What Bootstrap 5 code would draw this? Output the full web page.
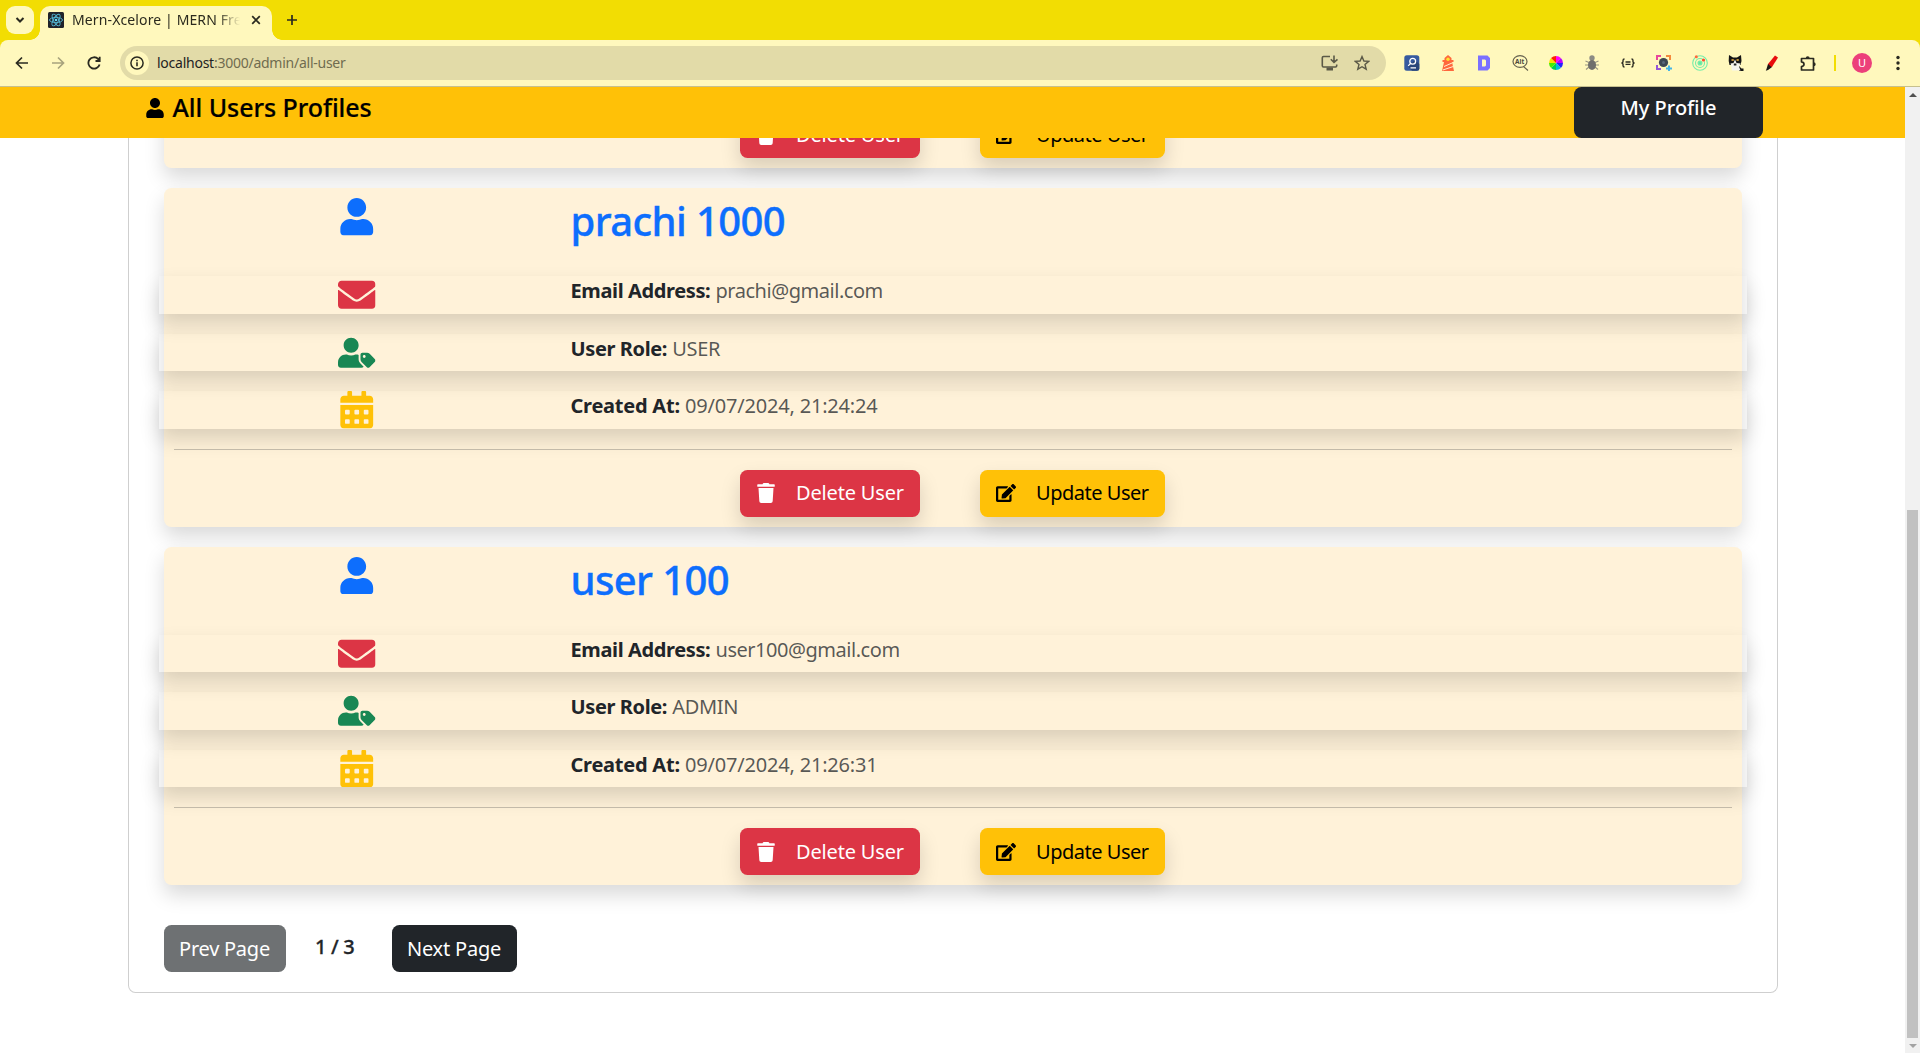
<!DOCTYPE html>
<html lang="en">
<head>
<meta charset="utf-8">
<title>Mern-Xcelore | MERN</title>
<link href="https://cdn.jsdelivr.net/npm/bootstrap@5.3.0/dist/css/bootstrap.min.css" rel="stylesheet">
<style>
html{font-size:20px}
body{font-family:"Noto Sans","Open Sans",sans-serif;height:1053px;overflow:hidden;background:#fff}
svg{display:block;flex:none}
.shadow{box-shadow:0 .5rem 1rem rgba(0,0,0,.15)!important}
.tabstrip{height:40px;background:#f2dd03;padding:6px 0 0 6px}
.tab-search{width:28px;height:28px;border-radius:9px;background:#fff8bd}
.tab-item{width:232px;height:34px;margin-left:6px;padding:0 11px 6px 8px;border-radius:10px 10px 0 0;background:#fff8bd}
.tab-item::before,.tab-item::after{content:"";position:absolute;bottom:0;width:10px;height:10px}
.tab-item::before{left:-10px;background:radial-gradient(circle at 0 0,transparent 9.5px,#fff8bd 10px)}
.tab-item::after{right:-10px;background:radial-gradient(circle at 100% 0,transparent 9.5px,#fff8bd 10px)}
.tab-name{width:168px;margin-left:8px;font-size:14px;line-height:20px;letter-spacing:.12px;color:#2b2a1e;white-space:nowrap;overflow:hidden;-webkit-mask-image:linear-gradient(90deg,#000 145px,transparent 168px);mask-image:linear-gradient(90deg,#000 145px,transparent 168px)}
.new-tab{margin:9px 0 0 15px}
.strip-back{background:#f2dd03}
.toolbar-row{height:47px;padding-left:4px;border-bottom:1px solid #c6c08f;border-radius:8px 8px 0 0;background:#fff8bd}
.slot{width:36px;height:46px;display:flex;align-items:center;justify-content:center;flex:none}
.addr{width:1266px;height:34px;margin-left:8px;border-radius:17px;background:#e2dba8;padding:0 8px 0 5px}
.addr .slot{width:32px}
.info-dot{width:24px;height:24px;border-radius:50%;background:#fff8bd}
.url{font-size:14px;line-height:20px;margin-left:8px;letter-spacing:-.25px;color:#706c4f}
.url b{font-weight:400;color:#222}
.ext-icons{margin-left:8px}
.avatar-dot{width:20px;height:20px;border-radius:50%;background:#ec407a;color:#fff;font-size:11px;line-height:20px;text-align:center}
.sep-slot{width:18px}
.sep-slot i{width:2px;height:16px;background:#f2dd03}
.pagebox{height:966px}
.topbar{height:51px;padding-left:145px;padding-right:142px;background:#ffc107}
.topbar h5{font-size:25px;line-height:30px;margin:5px 0 0 7.5px;color:#000;font-weight:500;letter-spacing:-.05px;-webkit-text-stroke:.2px #000}
.topbar svg{margin-top:11px}
.profile-btn{width:189px;height:51px;border-radius:7.5px;background:#212529;color:#fff;font-size:20px;line-height:30px;font-weight:500;padding-top:6px;text-align:center}
.main-area{height:915px}
.users-box{width:1650px;height:855px;margin-left:127.500px;padding:0 35px 20px;border:1px solid #cfcfcf;border-top:0;border-radius:0 0 7.5px 7.5px}
.user-card{background:#fff2d9;padding:10px;margin-bottom:20px;border-radius:7.5px;flex:none;position:relative}
.user-card .row{--bs-gutter-x:30px}
.user-card h2{font-size:40px;line-height:45px;margin:0 0 13px;font-weight:500;color:#0d6efd;letter-spacing:-.62px;-webkit-text-stroke:.35px #0d6efd}
.info-row{height:37.5px;margin-top:20px;line-height:30px;white-space:nowrap}
.info-row b{font-weight:700;color:#212529;letter-spacing:-.38px}
.info-row span{color:rgba(33,37,41,.75);letter-spacing:-.47px}
.info-row .role{letter-spacing:-.35px}
.info-row .made b{letter-spacing:-.24px}
.info-row .made span{letter-spacing:-.19px}
.user-card hr{margin:20px 0;opacity:.25;color:#212529}
.act{height:47px;border-radius:7.5px;padding:0 0 0 16px;font-size:20px;white-space:nowrap}
.act-del{width:180px;background:#dc3545;color:#fff;letter-spacing:-.17px}
.act-upd{width:185px;background:#ffc107;color:#000;margin-left:60px;letter-spacing:-.48px}
.act .tx{margin-left:20px}
.pager .btn{height:47px;padding:0;font-size:20px;border-radius:7.5px;border:0;color:#fff}
.pg-prev{width:122px;background:#6e7173!important;letter-spacing:-.25px}
.pg-next{width:125px;background:#212529!important;letter-spacing:-.2px}
.pg-count{width:106px;padding-left:29.500px;line-height:30px;margin-top:7px;font-weight:500;color:#212529;letter-spacing:-.3px;-webkit-text-stroke:.3px #212529}
.sbar{width:15px;background:#f1f1f1;padding:0 2px}
.sbar .arr{height:15px;display:flex;align-items:center;justify-content:center}
.sbar .thumb{width:11px;height:528px;background:#c1c1c1;margin-top:408px}
</style>
<script src="https://cdn.jsdelivr.net/npm/bootstrap@5.3.0/dist/js/bootstrap.bundle.min.js"></script>
</head>
<body>
<svg width="0" height="0" class="position-absolute">
<symbol id="i-user" viewBox="0 0 448 512"><path d="M224 256c70.7 0 128-57.3 128-128S294.700 0 224 0 96 57.300 96 128s57.300 128 128 128zm89.600 32h-16.700c-22.200 10.200-46.900 16-72.900 16s-50.600-5.800-72.900-16h-16.700C60.200 288 0 348.200 0 422.400V464c0 26.500 21.500 48 48 48h352c26.500 0 48-21.500 48-48v-41.600c0-74.200-60.200-134.400-134.400-134.400z"/></symbol>
<symbol id="i-mail" viewBox="0 0 512 512"><path d="M502.300 190.800c3.900-3.100 9.700-.2 9.700 4.700V400c0 26.500-21.500 48-48 48H48c-26.500 0-48-21.500-48-48V195.600c0-5 5.700-7.800 9.700-4.700 22.400 17.400 52.100 39.500 154.100 113.600 21.100 15.400 56.700 47.800 92.200 47.600 35.700.3 72-32.800 92.300-47.600 102-74.100 131.600-96.300 154-113.700zM256 320c23.200.4 56.600-29.200 73.400-41.400 132.700-96.300 142.800-104.700 173.400-128.700 5.800-4.500 9.200-11.500 9.200-18.900v-19c0-26.500-21.500-48-48-48H48c-26.500 0-48 21.500-48 48v19c0 7.400 3.400 14.300 9.200 18.900 30.600 23.900 40.700 32.400 173.400 128.700 16.800 12.200 50.200 41.800 73.400 41.400z"/></symbol>
<symbol id="i-tag" viewBox="0 0 640 512"><path d="M630.600 364.900l-90.300-90.200c-12-12-28.300-18.700-45.300-18.700h-79.300c-17.700 0-32 14.300-32 32v79.200c0 17 6.700 33.200 18.700 45.200l90.300 90.200c12.500 12.500 32.800 12.500 45.300 0l92.500-92.500c12.600-12.500 12.600-32.700.1-45.200zm-182.800-21c-13.300 0-24-10.700-24-24s10.700-24 24-24 24 10.700 24 24c0 13.200-10.700 24-24 24zm-223.800-88c70.700 0 128-57.300 128-128C352 57.300 294.700 0 224 0S96 57.300 96 128c0 70.600 57.300 127.900 128 127.900zm127.800 111.200V294c-12.200-3.600-24.900-6.200-38.200-6.200h-16.700c-22.200 10.200-46.900 16-72.900 16s-50.600-5.800-72.900-16h-16.700c-74.200 0-134.400 60.200-134.400 134.300v41.600c0 26.500 21.500 48 48 48h352c15.500 0 29.100-7.500 37.900-18.900l-58-58c-18.100-18.100-28.100-42.200-28.100-67.700z"/></symbol>
<symbol id="i-cal" viewBox="0 0 448 512"><path fill-rule="evenodd" d="M0 464c0 26.500 21.500 48 48 48h352c26.500 0 48-21.500 48-48V192H0v272zM320 268q0-12 12-12h40q12 0 12 12v40q0 12-12 12h-40q-12 0-12-12zM320 396q0-12 12-12h40q12 0 12 12v40q0 12-12 12h-40q-12 0-12-12zM192 268q0-12 12-12h40q12 0 12 12v40q0 12-12 12h-40q-12 0-12-12zM192 396q0-12 12-12h40q12 0 12 12v40q0 12-12 12h-40q-12 0-12-12zM64 268q0-12 12-12h40q12 0 12 12v40q0 12-12 12H76q-12 0-12-12zM64 396q0-12 12-12h40q12 0 12 12v40q0 12-12 12H76q-12 0-12-12zM400 64h-48V16c0-8.800-7.200-16-16-16h-32c-8.800 0-16 7.200-16 16v48H160V16c0-8.800-7.200-16-16-16h-32c-8.800 0-16 7.200-16 16v48H48C21.500 64 0 85.500 0 112v48h448v-48c0-26.500-21.500-48-48-48z"/></symbol>
<symbol id="i-trash" viewBox="0 0 448 512"><path d="M432 32H312l-9.400-18.700A24 24 0 0 0 281.100 0H166.800a23.720 23.720 0 0 0-21.400 13.300L136 32H16A16 16 0 0 0 0 48v32a16 16 0 0 0 16 16h416a16 16 0 0 0 16-16V48a16 16 0 0 0-16-16zM53.200 467a48 48 0 0 0 47.900 45h245.800a48 48 0 0 0 47.900-45L416 128H32z"/></symbol>
<symbol id="i-edit" viewBox="0 0 576 512"><path d="M402.600 83.200l90.200 90.200c3.800 3.800 3.800 10 0 13.800L274.400 405.600l-92.800 10.300c-12.400 1.400-22.900-9.100-21.500-21.500l10.300-92.800L388.800 83.200c3.800-3.800 10-3.800 13.800 0zm162-22.900l-48.800-48.800c-15.200-15.200-39.900-15.200-55.200 0l-35.400 35.400c-3.800 3.800-3.800 10 0 13.800l90.200 90.200c3.800 3.800 10 3.800 13.800 0l35.400-35.400c15.200-15.300 15.200-40 0-55.200zM384 346.200V448H64V128h229.800c3.200 0 6.200-1.300 8.500-3.500l40-40c7.600-7.600 2.200-20.500-8.500-20.500H48C21.500 64 0 85.500 0 112v352c0 26.500 21.500 48 48 48h352c26.500 0 48-21.500 48-48V306.200c0-10.700-12.900-16-20.500-8.500l-40 40c-2.200 2.300-3.500 5.300-3.500 8.500z"/></symbol>
</svg>

<div class="tabstrip d-flex">
  <div class="tab-search d-flex align-items-center justify-content-center"><svg width="10" height="8" viewBox="0 0 10 8" fill="none" stroke="#2a2a20" stroke-width="2"><path d="M1.500 2 5 5.500 8.500 2"/></svg></div>
  <div class="tab-item position-relative d-flex align-items-center">
    <svg width="16" height="16" viewBox="0 0 16 16"><rect width="16" height="16" rx="1.500" fill="#20232a"/><g fill="none" stroke="#53b9d6" stroke-width=".9"><ellipse cx="8" cy="8" rx="6.500" ry="2.600"/><ellipse cx="8" cy="8" rx="6.500" ry="2.600" transform="rotate(60 8 8)"/><ellipse cx="8" cy="8" rx="6.500" ry="2.600" transform="rotate(120 8 8)"/></g><circle cx="8" cy="8" r="1.300" fill="#61dafb"/></svg>
    <div class="tab-name">Mern-Xcelore | MERN Fre</div>
    <svg class="ms-auto" width="10" height="10" viewBox="0 0 10 10" stroke="#2a2a20" stroke-width="1.700"><path d="M1.200 1.200 8.800 8.800M8.800 1.200 1.200 8.800"/></svg>
  </div>
  <svg class="new-tab" width="10" height="10" viewBox="0 0 10 10" stroke="#2a2a20" stroke-width="1.700"><path d="M0 5H10M5 0V10"/></svg>
</div>
<div class="strip-back"><div class="toolbar-row d-flex align-items-center">
  <div class="slot"><svg width="14" height="14" viewBox="0 0 14 14" fill="none" stroke="#2a2a20" stroke-width="1.700"><path d="M13 7H2M7 1.500 1.500 7 7 12.500"/></svg></div>
  <div class="slot"><svg width="14" height="14" viewBox="0 0 14 14" fill="none" stroke="#a8a37d" stroke-width="1.700"><path d="M1 7h11M7 1.500 12.500 7 7 12.500"/></svg></div>
  <div class="slot"><svg width="14" height="14" viewBox="0 0 14 14" fill="none" stroke="#2a2a20" stroke-width="1.800"><path d="M12.600 8.500A5.700 5.700 0 1 1 11.200 3L12.500 4.400M12.700.8V5H8.500"/></svg></div>
  <div class="addr d-flex align-items-center">
    <div class="info-dot d-flex align-items-center justify-content-center"><svg width="14" height="14" viewBox="0 0 14 14"><circle cx="7" cy="7" r="6.100" fill="none" stroke="#2a2a20" stroke-width="1.500"/><path d="M7 6.200V10.300M7 3.700V5.200" stroke="#2a2a20" stroke-width="1.600"/></svg></div>
    <div class="url"><b>localhost</b>:3000/admin/all-user</div>
    <div class="slot ms-auto"><svg width="18" height="16" viewBox="0 0 18 16" fill="none" stroke="#5b5947" stroke-width="1.600"><path d="M9 1.500H2.500Q1.300 1.500 1.300 2.700V10.800Q1.300 12 2.500 12H14.500Q15.700 12 15.700 10.800V9.500M13 .5V7M9.800 4.300 13 7.400 16.500 4.300"/><path d="M5.500 14h6.500" stroke-width="3"/></svg></div>
    <div class="slot"><svg width="16" height="16" viewBox="0 0 16 16" fill="none" stroke="#5b5947" stroke-width="1.400"><path d="M8 1.600 9.900 6 14.700 6.400 11 9.500 12.200 14.200 8 11.700 3.800 14.200 5 9.500 1.300 6.400 6.100 6Z"/></svg></div>
  </div>
  <div class="d-flex ext-icons">
    <div class="slot"><svg width="16" height="16" viewBox="0 0 16 16"><rect x=".3" y=".3" width="15" height="15.400" rx="2.500" fill="#365a9f"/><path d="M11 5 15.300 9V13.200Q15.300 15.700 12.800 15.700H8L4 11Z" fill="#294579"/><circle cx="8.700" cy="6.300" r="2.900" fill="none" stroke="#fff" stroke-width="1.300"/><path d="M6.500 8.500 4.200 10.800M6.500 12.800h5.500" stroke="#fff" stroke-width="1.200"/></svg></div>
    <div class="slot"><svg width="14" height="16" viewBox="0 0 14 16"><path d="M7 0 10.500 3V5H12.500V7H11L13 16H1L3 7H1.500V5H3.500V3Z" fill="#ff683d"/><circle cx="7" cy="4.300" r="1.700" fill="#ffe32e"/><path d="M3 11.500 11 8M1.800 15 12.300 11.500" stroke="#fff0cf" stroke-width="1"/></svg></div>
    <div class="slot"><svg width="14" height="16" viewBox="0 0 14 16"><path fill="#7b70ff" fill-rule="evenodd" d="M1 .5H10.500L13 3V13L10.500 15.500H1ZM5 4.500V11.500H8L9 10.500V5.500L8 4.500Z"/></svg></div>
    <div class="slot"><svg width="17" height="16" viewBox="0 0 17 16" fill="none" stroke="#66624f" stroke-width="1.200"><ellipse cx="8" cy="6.500" rx="7" ry="5.800"/><path d="M11.500 11.500 16 15.500"/><text x="3" y="9" font-size="6.500" font-weight="700" stroke="none" fill="#4b493d">Alt</text></svg></div>
    <div class="slot"><svg width="14" height="14" viewBox="-7 -7 14 14"><path d="M0 0V-7A7 7 0 0 1 4.900-4.900Z" fill="#f0f"/><path d="M0 0 4.900-4.900A7 7 0 0 1 7 0Z" fill="#b0f"/><path d="M0 0H7A7 7 0 0 1 4.900 4.900Z" fill="#22f"/><path d="M0 0 4.900 4.900A7 7 0 0 1 0 7Z" fill="#0bd"/><path d="M0 0V7A7 7 0 0 1-4.900 4.900Z" fill="#0c5"/><path d="M0 0-4.900 4.900A7 7 0 0 1-7 0Z" fill="#4e0"/><path d="M0 0H-7A7 7 0 0 1-4.900-4.900Z" fill="#fd0"/><path d="M0 0-4.900-4.900A7 7 0 0 1 0-7Z" fill="#f20"/></svg></div>
    <div class="slot"><svg width="14" height="16" viewBox="0 0 14 16"><path d="M.5 6 4 7.500M13.500 6 10 7.500M0 10H14M1 14.500 4 12M13 14.500 10 12" stroke="#9a9783" stroke-width="1.200"/><circle cx="7" cy="3" r="2.700" fill="#8c8b84"/><ellipse cx="7" cy="10" rx="4" ry="5" fill="#6f6f6c"/></svg></div>
    <div class="slot"><svg width="14" height="10" viewBox="0 0 14 10" fill="none" stroke="#2d2c22" stroke-width="1.400"><path d="M3.500 1Q2 1 2 2.500V4L1 5 2 6V7.500Q2 9 3.500 9M10.500 1Q12 1 12 2.500V4L13 5 12 6V7.500Q12 9 10.500 9M4.500 4h5M4.500 6.400h5"/></svg></div>
    <div class="slot"><svg width="16" height="16" viewBox="0 0 16 16" fill="none" stroke-width="2"><path d="M1 5V1H5" stroke="#e8479b"/><path d="M10 1h4V5" stroke="#f58a3c"/><path d="M1 10v4H5" stroke="#9556d8"/><path d="M10 13.500h6M13 10.500v6" stroke="#43b4e8"/><circle cx="7.500" cy="7.500" r="4.600" fill="#3c4654"/><circle cx="7.500" cy="7.500" r="1.500" fill="#59677a"/></svg></div>
    <div class="slot"><svg width="16" height="16" viewBox="0 0 16 16" fill="none" stroke="#74eda9" stroke-width="1.100"><circle cx="8" cy="8" r="7.300"/><circle cx="8" cy="8" r="4.500"/><circle cx="8" cy="8" r="2" fill="#64e6a0"/><circle cx="4.300" cy="1.800" r="1.500" fill="#ff6a3c" stroke="none"/><circle cx="11.500" cy="5" r="1.600" fill="#ff4b2c" stroke="none"/></svg></div>
    <div class="slot"><svg width="16" height="16" viewBox="0 0 16 16"><path d="M1 0 5 2.500H9L13 0 13.500 6 12.500 10H1.500L.7 6Z" fill="#151515"/><path d="M11 11 13.500 13.500H15.500V16H11Z" fill="#151515"/><path d="M2.500 8.500 5.500 8 7 4.500 8.500 8 12.500 8.500 11 11.500 12.500 15.500H4L3.500 11.500Z" fill="#f6f5ee"/><path d="M3.500 5h2.300M8.500 5h2.300" stroke="#f1b644" stroke-width="1.400"/><path d="M5.800 9.500h2.600" stroke="#222" stroke-width="2"/></svg></div>
    <div class="slot"><svg width="14" height="16" viewBox="0 0 14 16"><path d="M10 .5 13 2.500 7 12 3 12.500 3 9Z" fill="#e80d0d"/><path d="M3 9 6.800 12.300 3 15 .8 15.800 1.500 14Z" fill="#1b1715"/></svg></div>
    <div class="slot"><svg width="17" height="17" viewBox="0 0 17 17"><path d="M1.500 3.500H13.500V15H1.500V11.500Q4 11 4 9.200 4 7.300 1.500 6.900Z" fill="none" stroke="#2a2a20" stroke-width="1.700" stroke-linejoin="round"/><path d="M5.700 3.500a2 2.200 0 0 1 4 0zM13.500 7.200a2.200 2 0 0 1 0 4z" fill="#2a2a20"/></svg></div>
  </div>
  <div class="slot sep-slot"><i></i></div>
  <div class="slot"><div class="avatar-dot">U</div></div>
  <div class="slot"><svg width="4" height="16" viewBox="0 0 4 16" fill="#2a2a20"><circle cx="2" cy="2.500" r="1.700"/><circle cx="2" cy="8" r="1.700"/><circle cx="2" cy="13.500" r="1.700"/></svg></div>
</div></div>

<div class="pagebox d-flex">
  <div class="flex-grow-1">
    <div class="topbar d-flex">
      <svg width="20" height="20" fill="#000"><use href="#i-user"/></svg>
      <h5>All Users Profiles</h5>
      <div class="profile-btn ms-auto">My Profile</div>
    </div>
    <div class="main-area overflow-hidden">
      <div class="users-box d-flex flex-column justify-content-end">
        <div class="user-card shadow pt-5"><div class="d-flex justify-content-center">
          <div class="act act-del shadow d-flex align-items-center"><svg width="20" height="20" fill="#fff"><use href="#i-trash"/></svg><span class="tx">Delete User</span></div>
          <div class="act act-upd shadow d-flex align-items-center"><svg width="20" height="20"><use href="#i-edit"/></svg><span class="tx">Update User</span></div>
        </div></div>

        <div class="user-card shadow">
          <div class="row"><div class="col-3 d-flex justify-content-center"><svg width="37.500" height="37.500" fill="#0d6efd"><use href="#i-user"/></svg></div><div class="col-9"><h2>prachi 1000</h2></div></div>
          <div class="row info-row shadow"><div class="col-3 d-flex justify-content-center"><svg width="37.500" height="37.500" fill="#dc3545"><use href="#i-mail"/></svg></div><div class="col-9"><b>Email Address:</b> <span>prachi@gmail.com</span></div></div>
          <div class="row info-row shadow"><div class="col-3 d-flex justify-content-center"><svg width="37.500" height="37.500" fill="#198754"><use href="#i-tag"/></svg></div><div class="col-9"><b>User Role:</b> <span class="role">USER</span></div></div>
          <div class="row info-row shadow"><div class="col-3 d-flex justify-content-center"><svg width="37.500" height="37.500" fill="#ffc107"><use href="#i-cal"/></svg></div><div class="col-9 made"><b>Created At:</b> <span>09/07/2024, 21:24:24</span></div></div>
          <hr>
          <div class="d-flex justify-content-center">
            <div class="act act-del shadow d-flex align-items-center"><svg width="20" height="20" fill="#fff"><use href="#i-trash"/></svg><span class="tx">Delete User</span></div>
            <div class="act act-upd shadow d-flex align-items-center"><svg width="20" height="20"><use href="#i-edit"/></svg><span class="tx">Update User</span></div>
          </div>
        </div>

        <div class="user-card shadow">
          <div class="row"><div class="col-3 d-flex justify-content-center"><svg width="37.500" height="37.500" fill="#0d6efd"><use href="#i-user"/></svg></div><div class="col-9"><h2>user 100</h2></div></div>
          <div class="row info-row shadow"><div class="col-3 d-flex justify-content-center"><svg width="37.500" height="37.500" fill="#dc3545"><use href="#i-mail"/></svg></div><div class="col-9"><b>Email Address:</b> <span>user100@gmail.com</span></div></div>
          <div class="row info-row shadow"><div class="col-3 d-flex justify-content-center"><svg width="37.500" height="37.500" fill="#198754"><use href="#i-tag"/></svg></div><div class="col-9"><b>User Role:</b> <span class="role">ADMIN</span></div></div>
          <div class="row info-row shadow"><div class="col-3 d-flex justify-content-center"><svg width="37.500" height="37.500" fill="#ffc107"><use href="#i-cal"/></svg></div><div class="col-9 made"><b>Created At:</b> <span>09/07/2024, 21:26:31</span></div></div>
          <hr>
          <div class="d-flex justify-content-center">
            <div class="act act-del shadow d-flex align-items-center"><svg width="20" height="20" fill="#fff"><use href="#i-trash"/></svg><span class="tx">Delete User</span></div>
            <div class="act act-upd shadow d-flex align-items-center"><svg width="20" height="20"><use href="#i-edit"/></svg><span class="tx">Update User</span></div>
          </div>
        </div>

        <div class="pager d-flex mt-3">
          <button class="btn pg-prev">Prev Page</button>
          <div class="pg-count">1 / 3</div>
          <button class="btn pg-next">Next Page</button>
        </div>
      </div>
    </div>
  </div>
  <div class="sbar">
    <div class="arr"><svg width="8" height="4" viewBox="0 0 8 4"><path d="M0 4 4 0 8 4Z" fill="#505050"/></svg></div>
    <div class="thumb"></div>
    <div class="arr"><svg width="8" height="4" viewBox="0 0 8 4"><path d="M0 0 4 4 8 0Z" fill="#a3a3a3"/></svg></div>
  </div>
</div>
</body>
</html>
